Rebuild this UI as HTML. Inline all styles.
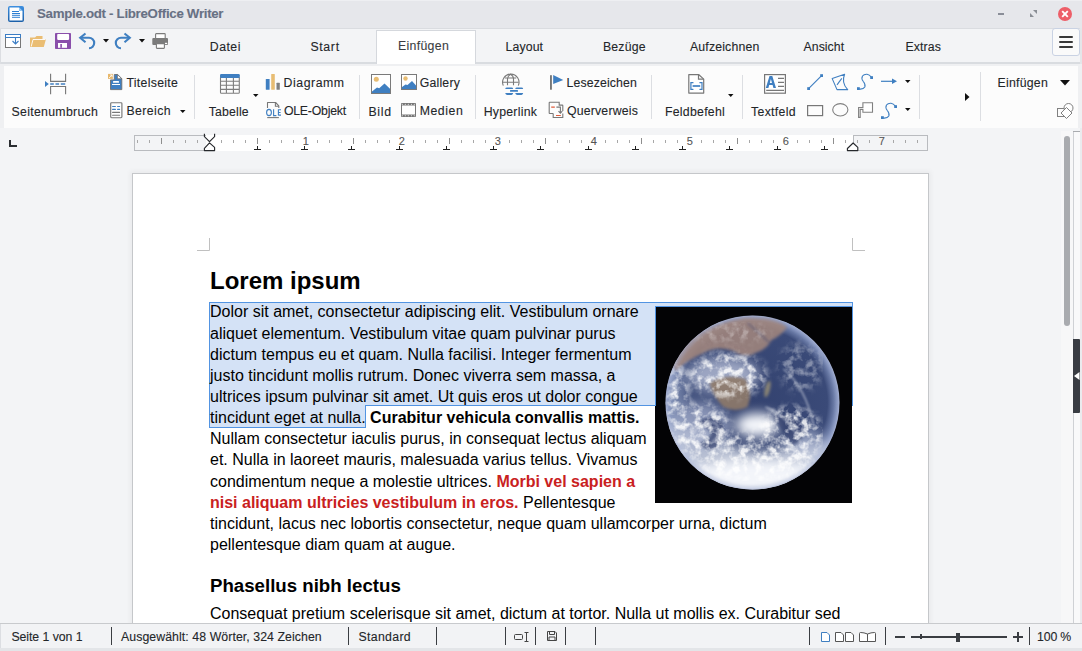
<!DOCTYPE html>
<html><head><meta charset="utf-8">
<style>
*{margin:0;padding:0;box-sizing:border-box}
html,body{width:1082px;height:651px;overflow:hidden;background:#f3f4f6;font-family:"Liberation Sans",sans-serif;color:#232629}
.a{position:absolute}
.t{position:absolute;font-size:13px;line-height:13px;white-space:nowrap;color:#232629;-webkit-text-stroke:0.1px currentColor}
.sep{position:absolute;width:1px;background:#dcdee2}
svg{position:absolute;overflow:visible}
#titlebar{position:absolute;left:0;top:0;width:1082px;height:28px;background:#e6e7eb;border-top:1px solid #eeeff2}
#tabrow{position:absolute;left:0;top:28px;width:1082px;height:36px;background:#f3f4f6;border-top:1px solid #dadce0;border-bottom:2px solid #d9dce0}
#ribbon{position:absolute;left:0;top:64px;width:1082px;height:64px;background:#eff0f2}
#ribbonin{position:absolute;left:4px;top:2px;width:1074px;height:62px;background:#fcfcfc}
#docarea{position:absolute;left:0;top:128px;width:1082px;height:495px;background:#f3f4f6}
#page{position:absolute;left:133px;top:174px;width:795px;height:460px;background:#fff;box-shadow:0 0 0 1px #c5c7ca,0 0 5px 3px rgba(0,0,0,0.045)}
.doc{position:absolute;left:210px;font-size:16px;line-height:21px;white-space:nowrap;color:#000}
.red{color:#c9211e}
#status{position:absolute;left:0;top:623px;width:1082px;height:28px;background:#f2f3f5;border-top:1px solid #c8cacd}
</style></head><body>
<div id="titlebar"></div>
<div id="tabrow"></div>
<!-- TITLE BAR -->
<svg style="left:8px;top:6px" width="16" height="16" viewBox="0 0 16 16">
 <defs><linearGradient id="tg" x1="0" y1="0" x2="0" y2="1"><stop offset="0" stop-color="#3d8fe0"/><stop offset="1" stop-color="#1b5fa8"/></linearGradient></defs>
 <rect x="0" y="0" width="16" height="16" rx="2" fill="url(#tg)"/>
 <path d="M1.5 1.5h9.5l3.5 3.5v9.5h-13z" fill="#fff"/>
 <path d="M11 1.5l3.5 3.5h-3.5z" fill="#8cc4f4"/>
 <path d="M4 5.5h7M4 7.5h8M4 9.3h8M4 11.3h8" stroke="#2d7fd2" stroke-width="1"/>
</svg>
<div class="t" style="left:37px;top:7px;font-weight:bold;font-size:13.3px;line-height:13px;letter-spacing:-0.3px;color:#687184">Sample.odt - LibreOffice Writer</div>
<div class="a" style="left:998px;top:12.6px;width:6px;height:2px;background:#8a8e98"></div>
<svg style="left:1030px;top:10px" width="7" height="7" viewBox="0 0 7 7"><path d="M0 7V3l4 4zM7 0v4L3 0z" fill="#8a8e95"/></svg>
<svg style="left:1058px;top:7px" width="14" height="14" viewBox="0 0 14 14"><circle cx="7" cy="7" r="7" fill="#ed5e68"/><path d="M4.2 4.2L9.8 9.8M9.8 4.2L4.2 9.8" stroke="#fff" stroke-width="1.9"/></svg>


<!-- TAB ROW -->
<div class="a" style="left:0;top:28px;width:1px;height:600px;background:#dcdee2"></div>
<svg style="left:5px;top:34px" width="16" height="14" viewBox="0 0 16 14">
 <rect x="0.5" y="0.5" width="15" height="13" fill="#fff" stroke="#777" stroke-width="1"/>
 <rect x="0" y="0" width="16" height="1" fill="#3b7dc4"/><rect x="0" y="3" width="16" height="1" fill="#3b7dc4"/>
 <rect x="0" y="0" width="1" height="4" fill="#3b7dc4"/><rect x="15" y="0" width="1" height="4" fill="#3b7dc4"/>
 <path d="M10.5 4v5.5M7.5 7l3 3l3-3" stroke="#3b7dc4" stroke-width="1.1" fill="none"/>
</svg>
<svg style="left:30px;top:35px" width="16" height="12" viewBox="0 0 16 12">
 <path d="M0 2.5h5l1.5-1.5h6v3H16l-2.2 8H0z" fill="#eabd73"/>
 <path d="M1.2 11.5L3 4.5h12.5" stroke="#fff" stroke-width="0.9" fill="none"/>
</svg>
<svg style="left:55px;top:33px" width="16" height="16" viewBox="0 0 16 16">
 <rect x="0" y="0" width="16" height="16" rx="0.8" fill="#8a4fab"/>
 <rect x="2.2" y="1.1" width="11.9" height="5.8" rx="0.8" fill="#fff"/>
 <rect x="3" y="10" width="9" height="4.8" fill="#fff"/>
 <rect x="5.3" y="11" width="1.6" height="3.8" fill="#8a4fab"/>
</svg>
<svg style="left:79px;top:33px" width="18" height="16" viewBox="0 0 18 16">
 <path d="M1.5 4.8h8.5a5.2 5.2 0 0 1 0 10.4" stroke="#3f7fc1" stroke-width="2.1" fill="none"/>
 <path d="M6.5 0.5L1.2 4.8L6.5 9.2" stroke="#3f7fc1" stroke-width="2.1" fill="none" stroke-linejoin="miter"/>
</svg>
<svg style="left:102.5px;top:39px" width="6" height="3.5" viewBox="0 0 6 3.5"><path d="M0 0h6l-3 3.5z" fill="#111"/></svg>
<svg style="left:113px;top:33px" width="18" height="16" viewBox="0 0 18 16">
 <path d="M16.5 4.8H8a5.2 5.2 0 0 0 0 10.4" stroke="#3f7fc1" stroke-width="2.1" fill="none"/>
 <path d="M11.5 0.5L16.8 4.8L11.5 9.2" stroke="#3f7fc1" stroke-width="2.1" fill="none"/>
</svg>
<svg style="left:138.5px;top:39px" width="6" height="3.5" viewBox="0 0 6 3.5"><path d="M0 0h6l-3 3.5z" fill="#111"/></svg>
<svg style="left:152px;top:33px" width="17" height="16" viewBox="0 0 17 16">
 <rect x="3.6" y="0.6" width="9.6" height="5" rx="0.6" fill="#fff" stroke="#7b7b7b" stroke-width="1.1"/>
 <rect x="0.3" y="5" width="15.7" height="7" rx="1" fill="#7b7b7b"/>
 <rect x="4.4" y="10.6" width="8" height="4.8" rx="0.6" fill="#fff" stroke="#7b7b7b" stroke-width="1.1"/>
 <rect x="13" y="9.8" width="2.2" height="1.3" fill="#fff"/>
</svg>
<div class="a" style="left:376px;top:30px;width:100px;height:34px;background:#fff;border:1px solid #d5d8dd;border-bottom:none"></div>
<div class="t" style="left:209.8px;top:41px;font-size:12.3px;letter-spacing:0.473px;color:#232629">Datei</div>
<div class="t" style="left:310.4px;top:41px;font-size:12.3px;letter-spacing:0.671px;color:#232629">Start</div>
<div class="t" style="left:398.0px;top:40px;font-size:12.3px;letter-spacing:0.316px;color:#3a3d42">Einfügen</div>
<div class="t" style="left:505.6px;top:41px;font-size:12.3px;letter-spacing:0.105px;color:#232629">Layout</div>
<div class="t" style="left:603.0px;top:41px;font-size:12.3px;letter-spacing:0.154px;color:#232629">Bezüge</div>
<div class="t" style="left:690.0px;top:41px;font-size:12.3px;letter-spacing:0.157px;color:#232629">Aufzeichnen</div>
<div class="t" style="left:803.5px;top:41px;font-size:12.3px;letter-spacing:0.045px;color:#232629">Ansicht</div>
<div class="t" style="left:905.5px;top:41px;font-size:12.3px;letter-spacing:0.107px;color:#232629">Extras</div>
<div class="a" style="left:1052px;top:28px;width:28px;height:28px;background:#fafafa;border:1px solid #c9d2e3;border-radius:3px"></div>
<div class="a" style="left:1059px;top:36px;width:14px;height:2px;background:#383838;border-radius:1px"></div>
<div class="a" style="left:1059px;top:41px;width:14px;height:2px;background:#383838;border-radius:1px"></div>
<div class="a" style="left:1059px;top:46px;width:14px;height:2px;background:#383838;border-radius:1px"></div>
<div class="a" style="left:1080px;top:28px;width:2px;height:36px;background:#e4e6e9"></div>
<div id="ribbon"><div id="ribbonin"></div></div>

<!-- RIBBON -->
<div class="sep" style="left:194px;top:75px;height:44px"></div>
<div class="sep" style="left:359px;top:75px;height:44px"></div>
<div class="sep" style="left:475px;top:75px;height:44px"></div>
<div class="sep" style="left:651px;top:75px;height:44px"></div>
<div class="sep" style="left:742px;top:75px;height:44px"></div>
<div class="sep" style="left:919px;top:75px;height:44px"></div>
<div class="sep" style="left:980px;top:72px;height:49px"></div>
<!-- Seitenumbruch -->
<svg style="left:44px;top:73px" width="23" height="22" viewBox="0 0 23 22">
 <path d="M6.6 0.8v7.6h15V0.8M6.6 21.2v-7.7h15v7.7" stroke="#777" stroke-width="1.1" fill="none"/>
 <path d="M1 8L4.8 11L1 14z" fill="#3f7fc1"/>
 <path d="M6.2 11h3.6M11.5 11h3.6M16.8 11h4.4" stroke="#3f7fc1" stroke-width="1.6"/>
</svg>
<div class="t" style="left:11.6px;top:106px;font-size:12.3px;letter-spacing:0.293px;color:#232629">Seitenumbruch</div>
<!-- Titelseite -->
<svg style="left:104px;top:70px" width="24" height="24" viewBox="0 0 24 24">
 <path d="M10.3 4.5H13.6L17.8 8.6V19.6H6.5V9.9H10.3z" fill="#3f7fc1" stroke="#6e6e6e" stroke-width="0.9" stroke-linejoin="round"/>
 <path d="M13.4 4.5V8.8H17.8z" fill="#fff" stroke="#6e6e6e" stroke-width="0.8" stroke-linejoin="round"/>
 <rect x="4" y="3.9" width="4.9" height="5" fill="#e8b86c"/>
 <path d="M5 8L8 5M6 5H8V7" stroke="#fff" stroke-width="0.8" fill="none"/>
 <rect x="9" y="11.1" width="6" height="1.7" rx="0.6" fill="#fff"/>
 <rect x="8" y="14" width="8" height="1" fill="#fff"/>
</svg>
<div class="t" style="left:126.5px;top:77px;font-size:12.3px;letter-spacing:0.292px;color:#232629">Titelseite</div>
<!-- Bereich -->
<svg style="left:104px;top:98px" width="24" height="24" viewBox="0 0 24 24">
 <rect x="6.7" y="4.7" width="11.2" height="15" rx="0.9" fill="#fff" stroke="#777" stroke-width="1.15"/>
 <path d="M8.6 8.5h2.8M13.6 8.5h2M8.6 11.4h2.8M13.6 11.4h2" stroke="#3f7fc1" stroke-width="1.1" stroke-linecap="round"/>
 <path d="M8.6 14.4h7M8.6 17.3h7" stroke="#777" stroke-width="1.1" stroke-linecap="round"/>
</svg>
<div class="t" style="left:126.5px;top:105px;font-size:12.3px;letter-spacing:0.396px;color:#232629">Bereich</div>
<svg style="left:180px;top:109.5px" width="5.5" height="3" viewBox="0 0 5.5 3"><path d="M0 0h5.5l-2.75 3z" fill="#111"/></svg>
<!-- Tabelle -->
<svg style="left:214px;top:70px" width="30" height="30" viewBox="0 0 30 30">
 <path d="M6 5.3Q6 4.05 7.2 4.05H24.6Q25.8 4.05 25.8 5.3V7.9H6z" fill="#3f7fc1"/>
 <path d="M6.5 7.5V22.5Q6.5 23.3 7.3 23.3H24.5Q25.3 23.3 25.3 22.5V7.5M12.4 7.9V23.3M19.4 7.9V23.3M6.5 11.3H25.3M6.5 15.2H25.3M6.5 19.4H25.3" stroke="#7d7d7d" stroke-width="1.1" fill="none"/>
</svg>
<svg style="left:253px;top:94px" width="5.5" height="3" viewBox="0 0 5.5 3"><path d="M0 0h5.5l-2.75 3z" fill="#111"/></svg>
<div class="t" style="left:208.7px;top:106px;font-size:12.3px;letter-spacing:0.170px;color:#232629">Tabelle</div>
<!-- Diagramm -->
<svg style="left:265px;top:74px" width="16" height="16" viewBox="0 0 16 16">
 <rect x="0.8" y="5" width="3.8" height="10.7" rx="0.5" fill="#3f7fc1"/>
 <rect x="6.2" y="0" width="3.6" height="15.7" rx="0.5" fill="#e8bd73"/>
 <rect x="11.5" y="8.8" width="3.3" height="6.9" rx="0.5" fill="#808080"/>
</svg>
<div class="t" style="left:283.6px;top:77px;font-size:12.3px;letter-spacing:0.537px;color:#232629">Diagramm</div>
<!-- OLE -->
<svg style="left:262px;top:98px" width="24" height="24" viewBox="0 0 24 24">
 <path d="M5.5 10V4.5H13.6L16.8 7.8V10" stroke="#777" stroke-width="1.1" fill="none" stroke-linejoin="round"/>
 <path d="M13.4 4.5V8.3H16.8" stroke="#777" stroke-width="1.1" fill="none"/>
 <ellipse cx="7" cy="14.5" rx="2.4" ry="3.1" fill="none" stroke="#3f7fc1" stroke-width="1.1"/>
 <path d="M11.6 11.2V17.6H14.4M16.4 11.2V17.6M16.4 11.7H19M16.4 14.5H18.6M16.4 17.1H19" stroke="#3f7fc1" stroke-width="1.1" fill="none"/>
 <path d="M5.2 19.6H16.9" stroke="#777" stroke-width="1.1"/>
</svg>
<div class="t" style="left:283.9px;top:105px;font-size:12.3px;letter-spacing:-0.222px;color:#232629">OLE-Objekt</div>
<!-- Bild -->
<svg style="left:371px;top:74px" width="20" height="20" viewBox="0 0 20 20">
 <rect x="0.5" y="0.5" width="19" height="19" fill="#fff" stroke="#7a7a7a"/>
 <circle cx="5.3" cy="5.3" r="2.5" fill="#e8bd73"/>
 <path d="M1 19V17.5L6 13.5L8.2 14.3L13.5 9.5L19 14.8V19z" fill="#3f7fc1"/>
</svg>
<div class="t" style="left:368.4px;top:106px;font-size:12.3px;letter-spacing:0.714px;color:#232629">Bild</div>
<!-- Gallery -->
<svg style="left:401px;top:74px" width="16" height="16" viewBox="0 0 16 16">
 <rect x="0.5" y="0.5" width="15" height="15" fill="#fff" stroke="#7a7a7a"/>
 <circle cx="4.5" cy="4.5" r="2.2" fill="#e8bd73"/>
 <path d="M1 15V13L4.5 10.5L6.5 11L11 7L15 11.5V15z" fill="#3f7fc1"/>
</svg>
<div class="t" style="left:419.8px;top:77px;font-size:12.3px;letter-spacing:0.177px;color:#232629">Gallery</div>
<!-- Medien -->
<svg style="left:401px;top:103px" width="15" height="14" viewBox="0 0 15 14">
 <rect x="0" y="0" width="15" height="14" rx="0.8" fill="#777"/>
 <rect x="1" y="2.5" width="13" height="9" fill="#fff"/>
 <g fill="#fff"><circle cx="1.3" cy="1.25" r="0.55"/><circle cx="4.3" cy="1.25" r="0.55"/><circle cx="7.3" cy="1.25" r="0.55"/><circle cx="10.4" cy="1.25" r="0.55"/><circle cx="13.3" cy="1.25" r="0.55"/>
 <circle cx="1.3" cy="12.75" r="0.55"/><circle cx="4.3" cy="12.75" r="0.55"/><circle cx="7.3" cy="12.75" r="0.55"/><circle cx="10.4" cy="12.75" r="0.55"/><circle cx="13.3" cy="12.75" r="0.55"/></g>
</svg>
<div class="t" style="left:419.7px;top:105px;font-size:12.3px;letter-spacing:0.542px;color:#232629">Medien</div>
<!-- Hyperlink -->
<svg style="left:498px;top:70px" width="30" height="30" viewBox="0 0 30 30">
 <path d="M5.3 15.6A8.2 8.2 0 1 1 20.3 15.6" stroke="#7a7a7a" stroke-width="1.1" fill="none"/>
 <path d="M9.5 15.3V9Q9.5 6 12.5 4.3Q15.5 6 15.5 9V15.3M4.5 12.2h16.2M6.8 8h11.4" stroke="#7a7a7a" stroke-width="1.1" fill="none"/>
 <path d="M7.2 18.9Q7.5 17.5 9 17.5h4.5Q15 17.5 15.2 18.9zM17.2 18.9Q17.5 17.5 19 17.5h4.5Q25 17.5 25.2 18.9zM7.2 23.1Q7.5 24.9 9 24.9h4.5Q15 24.9 15.2 23.1zM17.2 23.1Q17.5 24.9 19 24.9h4.5Q25 24.9 25.2 23.1z" fill="#3f7fc1"/>
 <rect x="12" y="20.1" width="8" height="1.7" rx="0.6" fill="#3f7fc1"/>
</svg>
<div class="t" style="left:483.7px;top:106px;font-size:12.3px;letter-spacing:0.240px;color:#232629">Hyperlink</div>
<!-- Lesezeichen -->
<svg style="left:540px;top:70px" width="30" height="22" viewBox="0 0 30 22">
 <rect x="10" y="5.2" width="1.9" height="14.5" fill="#777"/>
 <path d="M13.2 5L23.3 10L13.2 14z" fill="#3f7fc1"/>
</svg>
<div class="t" style="left:566.5px;top:77px;font-size:12.3px;letter-spacing:0.121px;color:#232629">Lesezeichen</div>
<!-- Querverweis -->
<svg style="left:540px;top:70px" width="30" height="52" viewBox="0 0 30 52">
 <path d="M13.2 43.5H9.7Q9.2 43.5 9.2 43V32.8Q9.2 32.3 9.7 32.3H19.2V35.1H22.3Q22.8 35.1 22.8 35.6V41" stroke="#777" stroke-width="1.1" fill="none"/>
 <path d="M13.2 43.5V47.5H22.8V43.5" stroke="#777" stroke-width="1.1" fill="none"/>
 <path d="M16.4 37.1H20.4V43.1M18.5 41.2L20.4 43.2L22.3 41.2" stroke="#777" stroke-width="1.1" fill="none"/>
 <path d="M11.2 37.1H14.8M16 45.5H20.8" stroke="#e05a3a" stroke-width="1.1"/>
</svg>
<div class="t" style="left:566.9px;top:105px;font-size:12.3px;letter-spacing:0.194px;color:#232629">Querverweis</div>
<!-- Feldbefehl -->
<svg style="left:682px;top:70px" width="30" height="30" viewBox="0 0 30 30">
 <path d="M6.8 4.7h10.1l4.8 4.4v14h-14.9z" fill="#fff" stroke="#777" stroke-width="1.2" stroke-linejoin="round"/>
 <path d="M16.5 4.7v4.4h5" stroke="#777" stroke-width="1.2" fill="none"/>
 <path d="M11 12.7H8.9V19.3H11M17.9 12.7H20V19.3H17.9" stroke="#3f7fc1" stroke-width="1.2" fill="none" stroke-linecap="round"/>
 <path d="M10.6 16h7.6" stroke="#3f7fc1" stroke-width="1.7"/>
</svg>
<svg style="left:727.5px;top:94px" width="5.5" height="3" viewBox="0 0 5.5 3"><path d="M0 0h5.5l-2.75 3z" fill="#111"/></svg>
<div class="t" style="left:665.0px;top:106px;font-size:12.3px;letter-spacing:0.255px;color:#232629">Feldbefehl</div>
<!-- Textfeld -->
<svg style="left:764px;top:74px" width="22" height="20" viewBox="0 0 22 20">
 <rect x="0.6" y="0.6" width="20.8" height="18.6" fill="#fff" stroke="#777" stroke-width="1.2"/>
 <path d="M1.8 13.9L5.5 2H8.3L12 13.9H9.4L8.6 11H5.2L4.4 13.9zM5.8 8.9H8L6.9 4.9z" fill="#3f7fc1"/>
 <path d="M14 4.4h6M14 8.4h6M14 12.4h6M2.2 16.4h17.8" stroke="#777" stroke-width="1.1"/>
</svg>
<div class="t" style="left:751.0px;top:106px;font-size:12.3px;letter-spacing:0.320px;color:#232629">Textfeld</div>
<!-- shapes -->
<svg style="left:806px;top:73px" width="18" height="18" viewBox="0 0 18 18">
 <path d="M2.6 15.6L15.6 2.6" stroke="#3f7fc1" stroke-width="1.1"/>
 <rect x="1.2" y="14.2" width="2.8" height="2.8" fill="#3f7fc1"/><rect x="14.2" y="1.2" width="2.8" height="2.8" fill="#3f7fc1"/>
</svg>
<svg style="left:830px;top:73px" width="20" height="18" viewBox="0 0 20 18">
 <path d="M2.2 5.6L14.6 1.2Q13 5 13.6 9Q14.4 13.5 17.7 16.6H7z" stroke="#3f7fc1" stroke-width="1.1" fill="none" stroke-linejoin="round"/>
 <path d="M7 11.8L11.8 5.4" stroke="#3f7fc1" stroke-width="1.1"/>
</svg>
<svg style="left:856px;top:73px" width="18" height="18" viewBox="0 0 18 18">
 <path d="M3 16Q7.5 16.5 8.8 14Q9.8 11.5 7.3 8.5Q5 5.5 6.5 3Q8 1 11 1.2Q13.5 1.5 15.2 4" stroke="#3f7fc1" stroke-width="1.1" fill="none"/>
 <rect x="1" y="14.2" width="2.8" height="2.8" fill="#3f7fc1"/><rect x="14.2" y="3.2" width="2.8" height="2.8" fill="#3f7fc1"/>
</svg>
<svg style="left:881px;top:78px" width="17" height="7" viewBox="0 0 17 7">
 <path d="M0 3.3h12" stroke="#3f7fc1" stroke-width="1.2"/><path d="M11 0.5L16 3.3L11 6.1z" fill="#3f7fc1"/>
</svg>
<svg style="left:904.5px;top:80px" width="5.5" height="3" viewBox="0 0 5.5 3"><path d="M0 0h5.5l-2.75 3z" fill="#111"/></svg>
<svg style="left:806px;top:104px" width="18" height="13" viewBox="0 0 18 13">
 <rect x="1.6" y="1.6" width="15" height="10" fill="none" stroke="#777" stroke-width="1.2"/>
</svg>
<svg style="left:831.5px;top:103px" width="17" height="14" viewBox="0 0 17 14">
 <ellipse cx="8.3" cy="6.8" rx="7.6" ry="6.2" fill="none" stroke="#808080" stroke-width="1.1"/>
</svg>
<svg style="left:856px;top:101px" width="18" height="18" viewBox="0 0 18 18">
 <path d="M6.9 1.8H16.5V11.2H6.9V8.4H4.2V16.4H2.6V6.5H6.9z" fill="#fff" stroke="#808080" stroke-width="1.1" stroke-linejoin="miter"/>
</svg>
<svg style="left:880px;top:102px" width="18" height="18" viewBox="0 0 18 18">
 <path d="M3 16Q7.5 16.5 8.8 14Q9.8 11.5 7.3 8.5Q5 5.5 6.5 3Q8 1 11 1.2Q13.5 1.5 15.2 4" stroke="#3f7fc1" stroke-width="1.1" fill="none"/>
 <rect x="1" y="14.2" width="2.8" height="2.8" fill="#3f7fc1"/><rect x="14.2" y="3.2" width="2.8" height="2.8" fill="#3f7fc1"/>
</svg>
<svg style="left:904.5px;top:108px" width="5.5" height="3" viewBox="0 0 5.5 3"><path d="M0 0h5.5l-2.75 3z" fill="#111"/></svg>
<svg style="left:965px;top:92.5px" width="4.5" height="8" viewBox="0 0 4.5 8"><path d="M0 0v8l4.5-4z" fill="#111"/></svg>
<div class="t" style="left:997.6px;top:77px;font-size:12.3px;letter-spacing:0.230px;color:#232629">Einfügen</div>
<svg style="left:1059.5px;top:80px" width="10" height="5.5" viewBox="0 0 10 5.5"><path d="M0 0h10l-5 5.5z" fill="#111"/></svg>
<svg style="left:1057px;top:103px" width="17" height="16" viewBox="0 0 17 16">
 <rect x="0.5" y="5.5" width="8" height="8" fill="none" stroke="#808080"/>
 <circle cx="11.5" cy="5" r="4.5" fill="#fff" stroke="#808080"/>
 <path d="M9.5 4.5L15 10L9.5 15.5L4 10z" fill="#fff" stroke="#808080"/>
</svg>

<div id="docarea"></div>
<div id="page"></div>

<!-- DOC AREA -->
<svg style="left:8.5px;top:139.5px" width="8" height="7" viewBox="0 0 8 7"><path d="M1 0v6h7" stroke="#2a2d31" stroke-width="2" fill="none"/></svg>
<div class="a" style="left:134px;top:135px;width:72px;height:16px;background:#f3f4f6;border:1px solid #b9bbbf;border-right:none"></div>
<div class="a" style="left:853px;top:135px;width:75px;height:16px;background:#f3f4f6;border:1px solid #b9bbbf"></div>
<div class="a" style="left:206px;top:135px;width:647px;height:16px;background:#fff"></div>
<div class="a" style="left:137.2px;top:140px;width:1px;height:2.5px;background:#a8a8a8"></div>
<div class="a" style="left:149.2px;top:140px;width:1px;height:2.5px;background:#a8a8a8"></div>
<div class="a" style="left:161.2px;top:138px;width:1px;height:6px;background:#8e8e8e"></div>
<div class="a" style="left:173.2px;top:140px;width:1px;height:2.5px;background:#a8a8a8"></div>
<div class="a" style="left:185.2px;top:140px;width:1px;height:2.5px;background:#a8a8a8"></div>
<div class="a" style="left:197.2px;top:140px;width:1px;height:2.5px;background:#a8a8a8"></div>
<div class="a" style="left:221.2px;top:140px;width:1px;height:2.5px;background:#a8a8a8"></div>
<div class="a" style="left:233.2px;top:140px;width:1px;height:2.5px;background:#a8a8a8"></div>
<div class="a" style="left:245.2px;top:140px;width:1px;height:2.5px;background:#a8a8a8"></div>
<div class="a" style="left:257.2px;top:138px;width:1px;height:6px;background:#8e8e8e"></div>
<div class="a" style="left:269.2px;top:140px;width:1px;height:2.5px;background:#a8a8a8"></div>
<div class="a" style="left:281.2px;top:140px;width:1px;height:2.5px;background:#a8a8a8"></div>
<div class="a" style="left:293.2px;top:140px;width:1px;height:2.5px;background:#a8a8a8"></div>
<div class="a" style="left:317.2px;top:140px;width:1px;height:2.5px;background:#a8a8a8"></div>
<div class="a" style="left:329.2px;top:140px;width:1px;height:2.5px;background:#a8a8a8"></div>
<div class="a" style="left:341.2px;top:140px;width:1px;height:2.5px;background:#a8a8a8"></div>
<div class="a" style="left:353.2px;top:138px;width:1px;height:6px;background:#8e8e8e"></div>
<div class="a" style="left:365.2px;top:140px;width:1px;height:2.5px;background:#a8a8a8"></div>
<div class="a" style="left:377.2px;top:140px;width:1px;height:2.5px;background:#a8a8a8"></div>
<div class="a" style="left:389.2px;top:140px;width:1px;height:2.5px;background:#a8a8a8"></div>
<div class="a" style="left:413.2px;top:140px;width:1px;height:2.5px;background:#a8a8a8"></div>
<div class="a" style="left:425.2px;top:140px;width:1px;height:2.5px;background:#a8a8a8"></div>
<div class="a" style="left:437.2px;top:140px;width:1px;height:2.5px;background:#a8a8a8"></div>
<div class="a" style="left:449.2px;top:138px;width:1px;height:6px;background:#8e8e8e"></div>
<div class="a" style="left:461.2px;top:140px;width:1px;height:2.5px;background:#a8a8a8"></div>
<div class="a" style="left:473.2px;top:140px;width:1px;height:2.5px;background:#a8a8a8"></div>
<div class="a" style="left:485.2px;top:140px;width:1px;height:2.5px;background:#a8a8a8"></div>
<div class="a" style="left:509.2px;top:140px;width:1px;height:2.5px;background:#a8a8a8"></div>
<div class="a" style="left:521.2px;top:140px;width:1px;height:2.5px;background:#a8a8a8"></div>
<div class="a" style="left:533.2px;top:140px;width:1px;height:2.5px;background:#a8a8a8"></div>
<div class="a" style="left:545.2px;top:138px;width:1px;height:6px;background:#8e8e8e"></div>
<div class="a" style="left:557.2px;top:140px;width:1px;height:2.5px;background:#a8a8a8"></div>
<div class="a" style="left:569.2px;top:140px;width:1px;height:2.5px;background:#a8a8a8"></div>
<div class="a" style="left:581.2px;top:140px;width:1px;height:2.5px;background:#a8a8a8"></div>
<div class="a" style="left:605.2px;top:140px;width:1px;height:2.5px;background:#a8a8a8"></div>
<div class="a" style="left:617.2px;top:140px;width:1px;height:2.5px;background:#a8a8a8"></div>
<div class="a" style="left:629.2px;top:140px;width:1px;height:2.5px;background:#a8a8a8"></div>
<div class="a" style="left:641.2px;top:138px;width:1px;height:6px;background:#8e8e8e"></div>
<div class="a" style="left:653.2px;top:140px;width:1px;height:2.5px;background:#a8a8a8"></div>
<div class="a" style="left:665.2px;top:140px;width:1px;height:2.5px;background:#a8a8a8"></div>
<div class="a" style="left:677.2px;top:140px;width:1px;height:2.5px;background:#a8a8a8"></div>
<div class="a" style="left:701.2px;top:140px;width:1px;height:2.5px;background:#a8a8a8"></div>
<div class="a" style="left:713.2px;top:140px;width:1px;height:2.5px;background:#a8a8a8"></div>
<div class="a" style="left:725.2px;top:140px;width:1px;height:2.5px;background:#a8a8a8"></div>
<div class="a" style="left:737.2px;top:138px;width:1px;height:6px;background:#8e8e8e"></div>
<div class="a" style="left:749.2px;top:140px;width:1px;height:2.5px;background:#a8a8a8"></div>
<div class="a" style="left:761.2px;top:140px;width:1px;height:2.5px;background:#a8a8a8"></div>
<div class="a" style="left:773.2px;top:140px;width:1px;height:2.5px;background:#a8a8a8"></div>
<div class="a" style="left:797.2px;top:140px;width:1px;height:2.5px;background:#a8a8a8"></div>
<div class="a" style="left:809.2px;top:140px;width:1px;height:2.5px;background:#a8a8a8"></div>
<div class="a" style="left:821.2px;top:140px;width:1px;height:2.5px;background:#a8a8a8"></div>
<div class="a" style="left:833.2px;top:138px;width:1px;height:6px;background:#8e8e8e"></div>
<div class="a" style="left:845.2px;top:140px;width:1px;height:2.5px;background:#a8a8a8"></div>
<div class="a" style="left:857.2px;top:140px;width:1px;height:2.5px;background:#a8a8a8"></div>
<div class="a" style="left:869.2px;top:140px;width:1px;height:2.5px;background:#a8a8a8"></div>
<div class="a" style="left:893.2px;top:140px;width:1px;height:2.5px;background:#a8a8a8"></div>
<div class="a" style="left:905.2px;top:140px;width:1px;height:2.5px;background:#a8a8a8"></div>
<div class="a" style="left:917.2px;top:140px;width:1px;height:2.5px;background:#a8a8a8"></div>
<div class="t" style="left:295.7px;top:136px;width:20px;text-align:center;font-size:11px;line-height:11px;color:#555">1</div>
<div class="t" style="left:391.7px;top:136px;width:20px;text-align:center;font-size:11px;line-height:11px;color:#555">2</div>
<div class="t" style="left:487.7px;top:136px;width:20px;text-align:center;font-size:11px;line-height:11px;color:#555">3</div>
<div class="t" style="left:583.7px;top:136px;width:20px;text-align:center;font-size:11px;line-height:11px;color:#555">4</div>
<div class="t" style="left:679.7px;top:136px;width:20px;text-align:center;font-size:11px;line-height:11px;color:#555">5</div>
<div class="t" style="left:775.7px;top:136px;width:20px;text-align:center;font-size:11px;line-height:11px;color:#555">6</div>
<div class="t" style="left:871.7px;top:136px;width:20px;text-align:center;font-size:11px;line-height:11px;color:#555">7</div>
<svg style="left:253.9px;top:146px" width="7" height="4" viewBox="0 0 7 4"><path d="M3.5 0v3.5M0 3.5h7" stroke="#222" stroke-width="1"/></svg>
<svg style="left:301.2px;top:146px" width="7" height="4" viewBox="0 0 7 4"><path d="M3.5 0v3.5M0 3.5h7" stroke="#222" stroke-width="1"/></svg>
<svg style="left:348.4px;top:146px" width="7" height="4" viewBox="0 0 7 4"><path d="M3.5 0v3.5M0 3.5h7" stroke="#222" stroke-width="1"/></svg>
<svg style="left:395.7px;top:146px" width="7" height="4" viewBox="0 0 7 4"><path d="M3.5 0v3.5M0 3.5h7" stroke="#222" stroke-width="1"/></svg>
<svg style="left:442.9px;top:146px" width="7" height="4" viewBox="0 0 7 4"><path d="M3.5 0v3.5M0 3.5h7" stroke="#222" stroke-width="1"/></svg>
<svg style="left:490.1px;top:146px" width="7" height="4" viewBox="0 0 7 4"><path d="M3.5 0v3.5M0 3.5h7" stroke="#222" stroke-width="1"/></svg>
<svg style="left:537.4px;top:146px" width="7" height="4" viewBox="0 0 7 4"><path d="M3.5 0v3.5M0 3.5h7" stroke="#222" stroke-width="1"/></svg>
<svg style="left:584.6px;top:146px" width="7" height="4" viewBox="0 0 7 4"><path d="M3.5 0v3.5M0 3.5h7" stroke="#222" stroke-width="1"/></svg>
<svg style="left:631.9px;top:146px" width="7" height="4" viewBox="0 0 7 4"><path d="M3.5 0v3.5M0 3.5h7" stroke="#222" stroke-width="1"/></svg>
<svg style="left:679.1px;top:146px" width="7" height="4" viewBox="0 0 7 4"><path d="M3.5 0v3.5M0 3.5h7" stroke="#222" stroke-width="1"/></svg>
<svg style="left:726.3px;top:146px" width="7" height="4" viewBox="0 0 7 4"><path d="M3.5 0v3.5M0 3.5h7" stroke="#222" stroke-width="1"/></svg>
<svg style="left:773.6px;top:146px" width="7" height="4" viewBox="0 0 7 4"><path d="M3.5 0v3.5M0 3.5h7" stroke="#222" stroke-width="1"/></svg>
<svg style="left:820.8px;top:146px" width="7" height="4" viewBox="0 0 7 4"><path d="M3.5 0v3.5M0 3.5h7" stroke="#222" stroke-width="1"/></svg>
<svg style="left:196px;top:130px" width="30" height="26" viewBox="0 0 30 26">
 <path d="M8.4 3.8V6.6L13.5 11.6L18.6 6.6V3.8" stroke="#26282c" stroke-width="1.15" fill="none"/>
 <path d="M13.5 12.9L8.4 18.3V20.6H18.6V17.4z" fill="#fff" stroke="#26282c" stroke-width="1.15" stroke-linejoin="round"/>
</svg>
<svg style="left:840px;top:130px" width="30" height="26" viewBox="0 0 30 26">
 <path d="M13.1 13L7.4 18.5V20.6H17.8V17.4z" fill="#fff" stroke="#26282c" stroke-width="1.15" stroke-linejoin="round"/>
</svg>
<!-- page corner marks -->
<svg style="left:197px;top:238px" width="13" height="13" viewBox="0 0 13 13"><path d="M12.5 0v12.5H0" stroke="#c0c0c0" stroke-width="1" fill="none"/></svg>
<svg style="left:852px;top:238px" width="13" height="13" viewBox="0 0 13 13"><path d="M0.5 0v12.5H13" stroke="#c0c0c0" stroke-width="1" fill="none"/></svg>
<!-- selection -->
<div class="a" style="left:209px;top:302px;width:644px;height:104px;background:#d4e2f6;border:1px solid #5294e2;border-bottom:none"></div>
<div class="a" style="left:209px;top:405px;width:157px;height:23px;background:#d4e2f6;border:1px solid #5294e2;border-top:none"></div>
<div class="a" style="left:366px;top:405px;width:290px;height:1px;background:#5294e2"></div>
<div class="t" style="left:210px;top:269px;font-size:24px;line-height:24px;font-weight:bold;color:#000;-webkit-text-stroke:0">Lorem ipsum</div>
<div class="doc" style="top:301px">Dolor sit amet, consectetur adipiscing elit. Vestibulum ornare</div>
<div class="doc" style="top:323px">aliquet elementum. Vestibulum vitae quam pulvinar purus</div>
<div class="doc" style="top:344px">dictum tempus eu et quam. Nulla facilisi. Integer fermentum</div>
<div class="doc" style="top:365px">justo tincidunt mollis rutrum. Donec viverra sem massa, a</div>
<div class="doc" style="top:386px">ultrices ipsum pulvinar sit amet. Ut quis eros ut dolor congue</div>
<div class="doc" style="top:407px">tincidunt eget at nulla. <b>Curabitur vehicula convallis mattis.</b></div>
<div class="doc" style="top:428px">Nullam consectetur iaculis purus, in consequat lectus aliquam</div>
<div class="doc" style="top:449px">et. Nulla in laoreet mauris, malesuada varius tellus. Vivamus</div>
<div class="doc" style="top:471px">condimentum neque a molestie ultrices. <b class="red">Morbi vel sapien a</b></div>
<div class="doc" style="top:492px"><b class="red">nisi aliquam ultricies vestibulum in eros.</b> Pellentesque</div>
<div class="doc" style="top:513px">tincidunt, lacus nec lobortis consectetur, neque quam ullamcorper urna, dictum</div>
<div class="doc" style="top:534px">pellentesque diam quam at augue.</div>
<div class="t" style="left:210px;top:577px;font-size:18.67px;line-height:18.67px;font-weight:bold;color:#000;-webkit-text-stroke:0">Phasellus nibh lectus</div>
<div class="doc" style="top:603px">Consequat pretium scelerisque sit amet, dictum at tortor. Nulla ut mollis ex. Curabitur sed</div>
<!-- earth image -->
<svg style="left:655px;top:307px;overflow:hidden" width="197" height="196" viewBox="0 0 197 196">
 <defs>
  <radialGradient id="eg" cx="0.5" cy="0.5" r="0.5">
   <stop offset="0" stop-color="#33426f"/><stop offset="0.86" stop-color="#3a4a78"/><stop offset="0.97" stop-color="#8090bb"/><stop offset="1" stop-color="#a4b0d2"/>
  </radialGradient>
  <clipPath id="ec"><circle cx="97" cy="95.5" r="87"/></clipPath>
  <filter id="tex" x="0" y="0" width="197" height="196" filterUnits="userSpaceOnUse">
   <feTurbulence type="fractalNoise" baseFrequency="0.13" numOctaves="3" seed="5" result="n"/>
   <feColorMatrix in="n" values="0 0 0 0 1  0 0 0 0 1  0 0 0 0 1  3.2 0 0 0 -1.3" result="c"/>
   <feComposite in="c" in2="SourceGraphic" operator="in"/>
  </filter>
  <filter id="b6" x="-30%" y="-30%" width="160%" height="160%"><feGaussianBlur stdDeviation="6"/></filter>
  <filter id="b4" x="-30%" y="-30%" width="160%" height="160%"><feGaussianBlur stdDeviation="4"/></filter>
  <filter id="b2" x="-30%" y="-30%" width="160%" height="160%"><feGaussianBlur stdDeviation="1.6"/></filter>
  <filter id="b1" x="-30%" y="-30%" width="160%" height="160%"><feGaussianBlur stdDeviation="0.8"/></filter>
 </defs>
 <rect width="197" height="196" fill="#030305"/>
 <g transform="translate(0.5 0)">
 <g clip-path="url(#ec)">
  <circle cx="97" cy="95.5" r="87" fill="url(#eg)"/>
  <!-- bright bottom / clouds base -->
  <g filter="url(#b6)">
   <path d="M0 120Q40 112 70 135Q100 150 130 140Q160 128 200 150V200H0z" fill="#dfe4ef" opacity="0.75"/>
   <ellipse cx="100" cy="172" rx="70" ry="20" fill="#f3f5fa"/>
   <ellipse cx="45" cy="120" rx="30" ry="25" fill="#aab4d0" opacity="0.7"/>
   <ellipse cx="68" cy="68" rx="36" ry="18" fill="#c6cde2" opacity="0.7"/>
   <ellipse cx="102" cy="118" rx="22" ry="12" fill="#f6f8fc"/>
   <ellipse cx="150" cy="135" rx="20" ry="14" fill="#b8c2db" opacity="0.6"/>
   <ellipse cx="20" cy="90" rx="10" ry="35" fill="#9aa7c8" opacity="0.6"/>
  </g>
  <!-- land -->
  <g filter="url(#b2)">
   <path d="M14 56Q22 40 40 28Q62 14 90 10Q120 9 132 20Q124 30 116 33Q112 42 100 46Q90 52 78 44Q62 38 48 46Q30 54 20 64Z" fill="#a5877c" opacity="0.85"/>
   <path d="M92 16Q104 26 114 36" stroke="#3f4a72" stroke-width="1.6" fill="none" opacity="0.7"/>
   <path d="M54 76Q70 66 90 72Q98 86 92 100Q80 106 68 100Q58 90 54 76Z" fill="#8f7a6a" opacity="0.9"/>
   <ellipse cx="112" cy="82" rx="2.5" ry="8.5" transform="rotate(14 112 82)" fill="#8a8474"/>
  </g>
  <!-- dark swirls -->
  <g filter="url(#b2)" fill="#34426e" opacity="0.75">
   <path d="M40 118Q52 105 66 115Q72 128 62 140Q50 146 44 136Q52 134 56 126Q50 116 40 118z"/>
   <path d="M118 110Q135 105 148 120Q150 132 138 138Q128 128 118 110z"/>
  </g>
  <!-- texture clouds -->
  <g filter="url(#tex)" opacity="0.85">
   <g filter="url(#b4)" fill="#fff">
    <ellipse cx="72" cy="68" rx="38" ry="22"/>
    <ellipse cx="45" cy="125" rx="30" ry="28"/>
    <ellipse cx="135" cy="128" rx="32" ry="28"/>
    <ellipse cx="145" cy="60" rx="22" ry="24" opacity="0.45"/>
    <ellipse cx="100" cy="150" rx="60" ry="24"/>
    <ellipse cx="20" cy="95" rx="12" ry="40"/>
    <ellipse cx="75" cy="25" rx="40" ry="10" opacity="0.35"/>
   </g>
  </g>
  <g filter="url(#b1)" fill="none" stroke="#eef1f8" stroke-width="1.6" opacity="0.55">
   <path d="M36 130Q44 112 60 116Q68 126 56 136"/>
   <path d="M128 62Q150 80 158 118"/>
   <path d="M110 100Q140 112 150 150"/>
  </g>
 </g>
 <g clip-path="url(#ec)"><circle cx="97" cy="95.5" r="86" fill="none" stroke="#9ba8cc" stroke-width="5" opacity="0.4" filter="url(#b2)"/></g>
 <circle cx="97" cy="95.5" r="86.6" fill="none" stroke="#a5b0d0" stroke-width="1" opacity="0.4"/>
 </g>
</svg>
<div class="a" style="left:655px;top:306px;width:198px;height:1px;background:#5294e2"></div>
<div class="a" style="left:655px;top:306px;width:1px;height:100px;background:#5294e2"></div>
<div class="a" style="left:852px;top:302px;width:1px;height:104px;background:#5294e2"></div>
<!-- scrollbar -->
<div class="a" style="left:1061px;top:131px;width:12px;height:492px;background:#f7f7f8"></div>
<div class="a" style="left:1064px;top:136px;width:6px;height:190px;border-radius:3px;background:#a9abaf"></div>
<div class="a" style="left:1073px;top:131px;width:1px;height:492px;background:#cfd1d5"></div>
<div class="a" style="left:1074px;top:131px;width:6px;height:492px;background:#f9f9fa"></div>
<div class="a" style="left:1073px;top:131px;width:7px;height:1px;background:#a9abaf"></div>
<div class="a" style="left:1080px;top:128px;width:2px;height:495px;background:#eaebee"></div>
<div class="a" style="left:1073px;top:339px;width:7px;height:74px;background:#393c43;border-radius:0 1px 1px 0"></div>
<svg style="left:1074px;top:372px" width="5.5" height="8" viewBox="0 0 5.5 8"><path d="M5.5 0v8L0 4z" fill="#fff"/></svg>
<div id="status"></div>

<!-- STATUS -->
<div class="t" style="left:11.4px;top:631px;font-size:12.3px;letter-spacing:-0.056px;color:#232629">Seite 1 von 1</div>
<div class="a" style="left:111px;top:627px;width:1px;height:18px;background:#3a3d42"></div>
<div class="t" style="left:121.0px;top:631px;font-size:12.3px;letter-spacing:0.075px;color:#232629">Ausgewählt: 48 Wörter, 324 Zeichen</div>
<div class="a" style="left:348px;top:627px;width:1px;height:18px;background:#3a3d42"></div>
<div class="t" style="left:358.4px;top:631px;font-size:12.3px;letter-spacing:0.345px;color:#232629">Standard</div>
<div class="a" style="left:436px;top:627px;width:1px;height:18px;background:#3a3d42"></div>
<div class="a" style="left:505px;top:627px;width:1px;height:18px;background:#3a3d42"></div>
<svg style="left:514px;top:632px" width="16" height="10" viewBox="0 0 16 10">
 <rect x="0.5" y="2.5" width="8" height="5" rx="1" fill="none" stroke="#444" stroke-width="1"/>
 <path d="M12.5 0.5v9M10.5 0.5h4M10.5 9.5h4" stroke="#444" stroke-width="1"/>
</svg>
<div class="a" style="left:535px;top:627px;width:1px;height:18px;background:#3a3d42"></div>
<svg style="left:547px;top:631px" width="10" height="10" viewBox="0 0 10 10">
 <path d="M0.5 0.5h7.5l1.5 1.5v7.5h-9z" fill="none" stroke="#444" stroke-width="1"/>
 <path d="M2.5 0.5v3h5v-3M2 9.5v-3.5h6v3.5" stroke="#444" stroke-width="1" fill="none"/>
</svg>
<div class="a" style="left:565px;top:627px;width:1px;height:18px;background:#3a3d42"></div>
<div class="a" style="left:595px;top:627px;width:1px;height:18px;background:#3a3d42"></div>
<div class="a" style="left:809px;top:627px;width:1px;height:18px;background:#3a3d42"></div>
<svg style="left:820.5px;top:632px" width="9" height="10" viewBox="0 0 9 10"><path d="M0.5 0.5h5.5l2.5 2.5v6.5h-8z" fill="#fff" stroke="#3f7fc1" stroke-width="1"/></svg>
<svg style="left:835px;top:632px" width="19" height="10" viewBox="0 0 19 10"><path d="M0.5 0.5h5.5l2.5 2.5v6.5h-8zM10.5 0.5h5.5l2.5 2.5v6.5h-8z" fill="#fff" stroke="#555" stroke-width="1"/></svg>
<svg style="left:858.5px;top:632px" width="17" height="10" viewBox="0 0 17 10"><path d="M8.5 2Q5 0.5 1.5 0.5Q0.5 0.5 0.5 1.5v8h8zM8.5 2Q12 0.5 15.5 0.5Q16.5 0.5 16.5 1.5v8h-8z" fill="#fff" stroke="#555" stroke-width="1"/></svg>
<div class="a" style="left:885px;top:627px;width:1px;height:18px;background:#3a3d42"></div>
<div class="a" style="left:895px;top:636px;width:10px;height:1.5px;background:#3a3d42"></div>
<div class="a" style="left:911px;top:636px;width:96px;height:1.5px;background:#3a3d42"></div>
<div class="a" style="left:920px;top:634px;width:2px;height:5px;background:#3a3d42"></div>
<div class="a" style="left:955.5px;top:632.5px;width:4px;height:9px;background:#3a3d42"></div>
<div class="a" style="left:1013px;top:636px;width:10px;height:1.5px;background:#3a3d42"></div>
<div class="a" style="left:1017.3px;top:632px;width:1.5px;height:10px;background:#3a3d42"></div>
<div class="a" style="left:1029px;top:627px;width:1px;height:18px;background:#3a3d42"></div>
<div class="t" style="left:1037.1px;top:631px;font-size:12.3px;letter-spacing:-0.179px;color:#232629">100 %</div>
<div class="a" style="left:0;top:648px;width:1082px;height:3px;background:#e3e5e8"></div>
<div class="a" style="left:0;top:624px;width:1px;height:24px;background:#dcdee2"></div>
</body></html>
